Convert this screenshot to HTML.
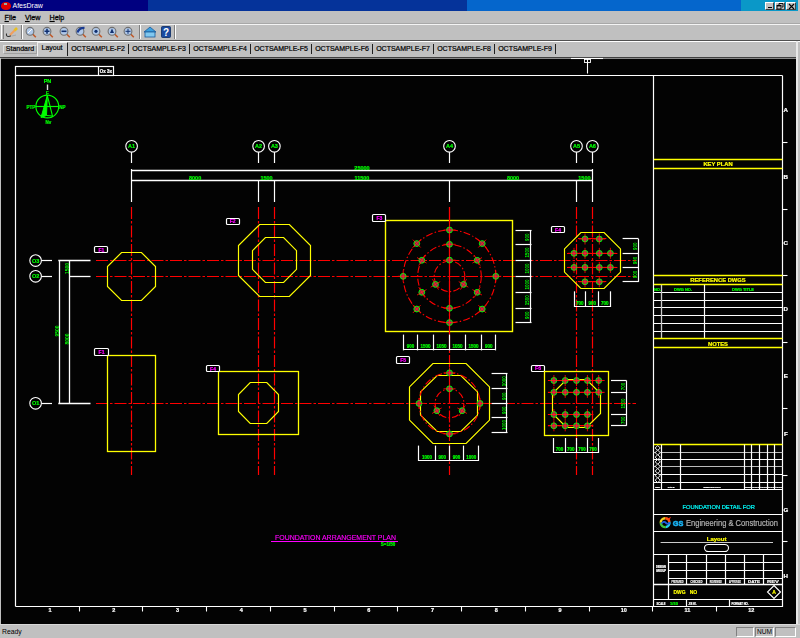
<!DOCTYPE html>
<html><head><meta charset="utf-8"><style>
*{box-sizing:border-box}
html,body{margin:0;padding:0}
body{width:800px;height:638px;overflow:hidden;position:relative;background:#c0c0c0;font-family:"Liberation Sans",sans-serif}
.a{position:absolute}
.btn{position:absolute;background:#c0c0c0;border-top:1px solid #fff;border-left:1px solid #fff;border-right:1px solid #404040;border-bottom:1px solid #404040}
.mi{position:absolute;top:11.8px;font-size:7.2px;color:#000;-webkit-text-stroke:0.25px #000;line-height:9px;transform:scaleY(1.12);transform-origin:0 0}
.mi u{text-decoration:underline}
.tab{position:absolute;top:43px;height:11px;font-size:7px;line-height:10px;color:#000;-webkit-text-stroke:0.2px #000;text-align:center;white-space:nowrap}
.sep{position:absolute;top:25px;width:2px;height:14px;border-left:1px solid #808080;border-right:1px solid #fff}
svg text{font-family:"Liberation Sans",sans-serif}
</style></head><body>
<!-- title bar -->
<div class="a" style="left:0;top:0;width:148px;height:11px;background:#000080"></div>
<div class="a" style="left:148px;top:0;width:319px;height:11px;background:#05339a"></div>
<div class="a" style="left:467px;top:0;width:274px;height:11px;background:#0566cc"></div>
<div class="a" style="left:741px;top:0;width:59px;height:11px;background:#0a98c8"></div>
<div class="a" style="left:0.5px;top:2px;width:10px;height:7.5px;border-radius:50%;background:#e00000"></div>
<div class="a" style="left:4px;top:3px;width:3px;height:2px;background:#9aa"></div>
<div class="a" style="left:12.5px;top:0px;font-size:7px;line-height:11px;color:#fff">AfesDraw</div>
<div class="btn" style="left:765px;top:1.5px;width:9px;height:8px"><div class="a" style="left:1.5px;top:4.5px;width:4px;height:1.3px;background:#000"></div></div>
<div class="btn" style="left:775px;top:1.5px;width:9.5px;height:8px"><svg class="a" style="left:0;top:0" width="8" height="7" viewBox="0 0 8 7"><path d="M3,0.5 H7 V4 H6 M3,0.5 V2" stroke="#000" stroke-width="0.9" fill="none"/><rect x="1" y="2.5" width="4" height="3.5" stroke="#000" stroke-width="0.9" fill="none"/><line x1="1" y1="2.8" x2="5" y2="2.8" stroke="#000" stroke-width="1.2"/></svg></div>
<div class="btn" style="left:786px;top:1.5px;width:10px;height:8px"><svg class="a" style="left:0;top:0" width="9" height="7" viewBox="0 0 9 7"><path d="M2,1 L7,6 M7,1 L2,6" stroke="#000" stroke-width="1.1"/></svg></div>
<div class="a" style="left:797.5px;top:0;width:2.5px;height:11px;background:#c0c0c0"></div>
<!-- menu -->
<div class="mi" style="left:4.5px"><u>F</u>ile</div>
<div class="mi" style="left:25px"><u>V</u>iew</div>
<div class="mi" style="left:49.5px"><u>H</u>elp</div>
<!-- toolbar -->
<div class="a" style="left:0;top:23px;width:800px;height:1px;background:#a8a8a8"></div><div class="a" style="left:0;top:24px;width:800px;height:1px;background:#f4f4f4"></div>
<div class="a" style="left:0;top:40px;width:800px;height:1.2px;background:#505050"></div>
<div class="a" style="left:1px;top:25px;width:3px;height:14px;border-left:1px solid #fff;border-right:1px solid #808080"></div>
<div class="sep" style="left:20.5px"></div>
<div class="sep" style="left:139px"></div>
<div class="sep" style="left:174px"></div>
<svg class="a" style="left:5px;top:26px" width="14" height="13" viewBox="0 0 14 13"><path d="M1.5,7.5 Q1,10.5 3.5,10.5 Q5,10.5 6,9.5" stroke="#303030" stroke-width="1.1" fill="none"/><path d="M5,9 L10.5,3.5" stroke="#f0a060" stroke-width="2.2"/><path d="M9.5,4.5 L12,2" stroke="#e8c020" stroke-width="2.6"/><path d="M7,10 L11,9" stroke="#a0a0a0" stroke-width="0.8"/></svg>
<svg class="a" style="left:24.4px;top:25px" width="14" height="14" viewBox="0 0 14 14"><line x1="8.8" y1="9.3" x2="11.8" y2="12.3" stroke="#c05828" stroke-width="1.6"/><circle cx="6" cy="6.3" r="3.9" fill="#b0c8e8" stroke="#707070" stroke-width="1.1"/><path d="M4,8 L8,4" stroke="#fff" stroke-width="1"/></svg>
<svg class="a" style="left:40.7px;top:25px" width="14" height="14" viewBox="0 0 14 14"><line x1="8.8" y1="9.3" x2="11.8" y2="12.3" stroke="#c05828" stroke-width="1.6"/><circle cx="6" cy="6.3" r="3.9" fill="#b0c8e8" stroke="#707070" stroke-width="1.1"/><path d="M3.5,6.3 H8.5 M6,3.8 V8.8" stroke="#103070" stroke-width="1.6"/></svg>
<svg class="a" style="left:57.5px;top:25px" width="14" height="14" viewBox="0 0 14 14"><line x1="8.8" y1="9.3" x2="11.8" y2="12.3" stroke="#c05828" stroke-width="1.6"/><circle cx="6" cy="6.3" r="3.9" fill="#b0c8e8" stroke="#707070" stroke-width="1.1"/><path d="M3.5,6.3 H8.5" stroke="#103070" stroke-width="1.6"/></svg>
<svg class="a" style="left:74px;top:25px" width="14" height="14" viewBox="0 0 14 14"><line x1="8.8" y1="9.3" x2="11.8" y2="12.3" stroke="#c05828" stroke-width="1.6"/><circle cx="6" cy="6.3" r="3.9" fill="#b0c8e8" stroke="#707070" stroke-width="1.1"/><path d="M3.5,7.5 Q5,2.5 10.5,2.8" stroke="#1a3a90" stroke-width="2.2" fill="none"/></svg>
<svg class="a" style="left:90.3px;top:25px" width="14" height="14" viewBox="0 0 14 14"><line x1="8.8" y1="9.3" x2="11.8" y2="12.3" stroke="#c05828" stroke-width="1.6"/><circle cx="6" cy="6.3" r="3.9" fill="#b0c8e8" stroke="#707070" stroke-width="1.1"/><circle cx="6" cy="6.3" r="1.6" fill="#103070"/></svg>
<svg class="a" style="left:106.3px;top:25px" width="14" height="14" viewBox="0 0 14 14"><line x1="8.8" y1="9.3" x2="11.8" y2="12.3" stroke="#c05828" stroke-width="1.6"/><circle cx="6" cy="6.3" r="3.9" fill="#b0c8e8" stroke="#707070" stroke-width="1.1"/><path d="M6,3.5 L8,8 L4,8 Z" fill="#103070"/></svg>
<svg class="a" style="left:122.1px;top:25px" width="14" height="14" viewBox="0 0 14 14"><line x1="8.8" y1="9.3" x2="11.8" y2="12.3" stroke="#c05828" stroke-width="1.6"/><circle cx="6" cy="6.3" r="3.9" fill="#b0c8e8" stroke="#707070" stroke-width="1.1"/><path d="M3.5,6.3 H8.5 M6,3.8 V8.8" stroke="#103070" stroke-width="1"/></svg>
<svg class="a" style="left:143px;top:26px" width="14" height="12" viewBox="0 0 14 12"><path d="M1,6 L7,1 L13,6 Z" fill="#3aa0e0" stroke="#1a5a9a" stroke-width="0.8"/><rect x="2" y="6" width="10" height="5" fill="#80c8f0" stroke="#1a5a9a" stroke-width="0.8"/></svg>
<svg class="a" style="left:161px;top:26px" width="10" height="12" viewBox="0 0 10 12"><rect x="0.5" y="0.5" width="9" height="11" rx="1" fill="#1a4aa0" stroke="#0a2a60" stroke-width="0.8"/><text x="5" y="9.5" font-size="10" font-weight="bold" fill="#fff" text-anchor="middle" font-family="Liberation Sans">?</text></svg>
<!-- tabs -->
<div class="a" style="left:0;top:41px;width:800px;height:1px;background:#fff"></div>
<div class="a" style="left:2.5px;top:44.5px;width:34.5px;height:9px;border:1px solid #e0e0e0;border-right-color:#a0a0a0;border-bottom-color:#a0a0a0"></div>
<div class="tab" style="left:3px;top:44px;width:34px">Standard</div>
<div class="a" style="left:37px;top:42px;width:31px;height:14px;background:#c6c6c6;border-left:1px solid #f0f0f0;border-top:1px solid #f0f0f0;border-right:1.2px solid #202020"></div>
<div class="tab" style="left:38px;top:42.5px;width:28px">Layout</div>
<div class="tab" style="left:68px;top:44px;width:60px">OCTSAMPLE-F2</div>
<div class="a" style="left:128px;top:43.5px;width:1.2px;height:10px;background:#202020"></div>
<div class="tab" style="left:129px;top:44px;width:60px">OCTSAMPLE-F3</div>
<div class="a" style="left:189px;top:43.5px;width:1.2px;height:10px;background:#202020"></div>
<div class="tab" style="left:190px;top:44px;width:60px">OCTSAMPLE-F4</div>
<div class="a" style="left:250px;top:43.5px;width:1.2px;height:10px;background:#202020"></div>
<div class="tab" style="left:251px;top:44px;width:60px">OCTSAMPLE-F5</div>
<div class="a" style="left:311px;top:43.5px;width:1.2px;height:10px;background:#202020"></div>
<div class="tab" style="left:312px;top:44px;width:60px">OCTSAMPLE-F6</div>
<div class="a" style="left:372px;top:43.5px;width:1.2px;height:10px;background:#202020"></div>
<div class="tab" style="left:373px;top:44px;width:60px">OCTSAMPLE-F7</div>
<div class="a" style="left:433px;top:43.5px;width:1.2px;height:10px;background:#202020"></div>
<div class="tab" style="left:434px;top:44px;width:60px">OCTSAMPLE-F8</div>
<div class="a" style="left:494px;top:43.5px;width:1.2px;height:10px;background:#202020"></div>
<div class="tab" style="left:495px;top:44px;width:60px">OCTSAMPLE-F9</div>
<div class="a" style="left:555px;top:43.5px;width:1.2px;height:10px;background:#202020"></div>
<div class="a" style="left:0;top:56.5px;width:796.5px;height:1.5px;background:#404040"></div>
<div class="a" style="left:1px;top:58px;width:795.5px;height:1px;background:#8a8a8a"></div>
<!-- canvas -->
<div class="a" style="left:1px;top:59px;width:795.5px;height:565px;background:#030303"></div>
<div class="a" style="left:796px;top:41px;width:1.8px;height:583px;background:#e8e8e8"></div>
<!-- status -->
<div class="a" style="left:0;top:624px;width:800px;height:1px;background:#d8d8d8"></div>
<div class="a" style="left:2px;top:625.5px;font-size:6.8px;line-height:12px;color:#000">Ready</div>
<div class="a" style="left:736px;top:627px;width:18px;height:9.5px;border:1px solid #808080;border-right-color:#fff;border-bottom-color:#fff"></div>
<div class="a" style="left:755px;top:627px;width:19px;height:9.5px;border:1px solid #808080;border-right-color:#fff;border-bottom-color:#fff;font-size:6.6px;line-height:8px;text-align:center;color:#000">NUM</div>
<div class="a" style="left:775px;top:627px;width:21px;height:9.5px;border:1px solid #808080;border-right-color:#fff;border-bottom-color:#fff"></div>
<svg class="a" style="left:0;top:0;will-change:transform" width="800" height="638" viewBox="0 0 800 638">
<rect x="15.50" y="66.50" width="98.00" height="9.00" stroke="#fff" stroke-width="1.2" fill="none" />
<line x1="98.50" y1="66.60" x2="98.50" y2="75.40" stroke="#fff" stroke-width="1.2" />
<text x="106.00" y="73.00" fill="#fff" font-size="4.5" text-anchor="middle" font-weight="bold"  stroke="#fff" stroke-width="0.22">Ox 3x</text>
<line x1="15.60" y1="75.50" x2="782.40" y2="75.50" stroke="#fff" stroke-width="1.2" />
<line x1="15.50" y1="75.50" x2="15.50" y2="606.50" stroke="#fff" stroke-width="1.2" />
<line x1="782.50" y1="75.50" x2="782.50" y2="607.00" stroke="#fff" stroke-width="1.2" />
<line x1="15.60" y1="606.50" x2="782.40" y2="606.50" stroke="#fff" stroke-width="1.2" />
<line x1="653.50" y1="75.50" x2="653.50" y2="607.00" stroke="#fff" stroke-width="1.2" />
<line x1="571.00" y1="58.50" x2="603.00" y2="58.50" stroke="#fff" stroke-width="1.1" />
<line x1="587.50" y1="59.00" x2="587.50" y2="73.50" stroke="#fff" stroke-width="1.1" />
<rect x="584.50" y="59.50" width="6.00" height="3.00" stroke="#fff" stroke-width="0.9" fill="none" />
<text x="785.80" y="112.40" fill="#fff" font-size="6.2" text-anchor="middle" font-weight="bold"  stroke="#fff" stroke-width="0.22">A</text>
<text x="785.80" y="178.90" fill="#fff" font-size="6.2" text-anchor="middle" font-weight="bold"  stroke="#fff" stroke-width="0.22">B</text>
<text x="785.80" y="244.90" fill="#fff" font-size="6.2" text-anchor="middle" font-weight="bold"  stroke="#fff" stroke-width="0.22">C</text>
<text x="785.80" y="311.40" fill="#fff" font-size="6.2" text-anchor="middle" font-weight="bold"  stroke="#fff" stroke-width="0.22">D</text>
<text x="785.80" y="378.40" fill="#fff" font-size="6.2" text-anchor="middle" font-weight="bold"  stroke="#fff" stroke-width="0.22">E</text>
<text x="785.80" y="435.90" fill="#fff" font-size="6.2" text-anchor="middle" font-weight="bold"  stroke="#fff" stroke-width="0.22">F</text>
<text x="785.80" y="512.40" fill="#fff" font-size="6.2" text-anchor="middle" font-weight="bold"  stroke="#fff" stroke-width="0.22">G</text>
<text x="785.80" y="578.00" fill="#fff" font-size="6.2" text-anchor="middle" font-weight="bold"  stroke="#fff" stroke-width="0.22">H</text>
<line x1="782.40" y1="142.50" x2="787.50" y2="142.50" stroke="#fff" stroke-width="1.1" />
<line x1="782.40" y1="209.50" x2="787.50" y2="209.50" stroke="#fff" stroke-width="1.1" />
<line x1="782.40" y1="275.50" x2="787.50" y2="275.50" stroke="#fff" stroke-width="1.1" />
<line x1="782.40" y1="342.50" x2="787.50" y2="342.50" stroke="#fff" stroke-width="1.1" />
<line x1="782.40" y1="408.50" x2="787.50" y2="408.50" stroke="#fff" stroke-width="1.1" />
<line x1="782.40" y1="475.50" x2="787.50" y2="475.50" stroke="#fff" stroke-width="1.1" />
<line x1="782.40" y1="541.50" x2="787.50" y2="541.50" stroke="#fff" stroke-width="1.1" />
<text x="50.00" y="611.90" fill="#fff" font-size="5.5" text-anchor="middle" font-weight="bold"  stroke="#fff" stroke-width="0.22">1</text>
<text x="113.75" y="611.90" fill="#fff" font-size="5.5" text-anchor="middle" font-weight="bold"  stroke="#fff" stroke-width="0.22">2</text>
<text x="177.50" y="611.90" fill="#fff" font-size="5.5" text-anchor="middle" font-weight="bold"  stroke="#fff" stroke-width="0.22">3</text>
<text x="241.25" y="611.90" fill="#fff" font-size="5.5" text-anchor="middle" font-weight="bold"  stroke="#fff" stroke-width="0.22">4</text>
<text x="305.00" y="611.90" fill="#fff" font-size="5.5" text-anchor="middle" font-weight="bold"  stroke="#fff" stroke-width="0.22">5</text>
<text x="368.75" y="611.90" fill="#fff" font-size="5.5" text-anchor="middle" font-weight="bold"  stroke="#fff" stroke-width="0.22">6</text>
<text x="432.50" y="611.90" fill="#fff" font-size="5.5" text-anchor="middle" font-weight="bold"  stroke="#fff" stroke-width="0.22">7</text>
<text x="496.25" y="611.90" fill="#fff" font-size="5.5" text-anchor="middle" font-weight="bold"  stroke="#fff" stroke-width="0.22">8</text>
<text x="560.00" y="611.90" fill="#fff" font-size="5.5" text-anchor="middle" font-weight="bold"  stroke="#fff" stroke-width="0.22">9</text>
<text x="623.75" y="611.90" fill="#fff" font-size="5.5" text-anchor="middle" font-weight="bold"  stroke="#fff" stroke-width="0.22">10</text>
<text x="687.50" y="611.90" fill="#fff" font-size="5.5" text-anchor="middle" font-weight="bold"  stroke="#fff" stroke-width="0.22">11</text>
<text x="751.25" y="611.90" fill="#fff" font-size="5.5" text-anchor="middle" font-weight="bold"  stroke="#fff" stroke-width="0.22">12</text>
<line x1="79.50" y1="606.50" x2="79.50" y2="611.50" stroke="#fff" stroke-width="1.1" />
<line x1="142.50" y1="606.50" x2="142.50" y2="611.50" stroke="#fff" stroke-width="1.1" />
<line x1="206.50" y1="606.50" x2="206.50" y2="611.50" stroke="#fff" stroke-width="1.1" />
<line x1="270.50" y1="606.50" x2="270.50" y2="611.50" stroke="#fff" stroke-width="1.1" />
<line x1="334.50" y1="606.50" x2="334.50" y2="611.50" stroke="#fff" stroke-width="1.1" />
<line x1="397.50" y1="606.50" x2="397.50" y2="611.50" stroke="#fff" stroke-width="1.1" />
<line x1="461.50" y1="606.50" x2="461.50" y2="611.50" stroke="#fff" stroke-width="1.1" />
<line x1="525.50" y1="606.50" x2="525.50" y2="611.50" stroke="#fff" stroke-width="1.1" />
<line x1="589.50" y1="606.50" x2="589.50" y2="611.50" stroke="#fff" stroke-width="1.1" />
<line x1="652.50" y1="606.50" x2="652.50" y2="611.50" stroke="#fff" stroke-width="1.1" />
<line x1="716.50" y1="606.50" x2="716.50" y2="611.50" stroke="#fff" stroke-width="1.1" />
<text x="47.50" y="83.20" fill="#0f0" font-size="5.5" text-anchor="middle" font-weight="bold"  stroke="#0f0" stroke-width="0.22">PN</text>
<line x1="47.50" y1="84.50" x2="47.50" y2="90.00" stroke="#ddd" stroke-width="1.4" />
<text x="47.30" y="94.50" fill="#0f0" font-size="4.5" text-anchor="middle" font-weight="bold"  stroke="#0f0" stroke-width="0.22">F</text>
<circle cx="47.30" cy="106.50" r="11.40" stroke="#0f0" stroke-width="1.2" fill="none" />
<line x1="35.50" y1="106.50" x2="59.00" y2="106.50" stroke="#0f0" stroke-width="1.2" />
<polygon points="47.3,95.5 41,117.5 46.5,115.5" fill="#0f0" stroke="#0f0" stroke-width="1"/>
<line x1="47.30" y1="95.50" x2="52.50" y2="116.00" stroke="#0f0" stroke-width="1.1" />
<line x1="46.50" y1="115.50" x2="52.50" y2="116.00" stroke="#0f0" stroke-width="1" />
<text x="31.00" y="108.60" fill="#0f0" font-size="4.5" text-anchor="middle" font-weight="bold"  stroke="#0f0" stroke-width="0.22">PTP</text>
<text x="62.50" y="108.60" fill="#0f0" font-size="4.5" text-anchor="middle" font-weight="bold"  stroke="#0f0" stroke-width="0.22">NP</text>
<text x="48.50" y="123.80" fill="#0f0" font-size="4.5" text-anchor="middle" font-weight="bold"  stroke="#0f0" stroke-width="0.22">Nv</text>
<circle cx="131.60" cy="146.30" r="5.80" stroke="#fff" stroke-width="1.1" fill="#000" />
<text x="131.60" y="148.40" fill="#0f0" font-size="5.5" text-anchor="middle" font-weight="bold"  stroke="#0f0" stroke-width="0.22">A1</text>
<line x1="131.50" y1="152.10" x2="131.50" y2="163.00" stroke="#fff" stroke-width="1.2" />
<line x1="131.50" y1="207.00" x2="131.50" y2="475.00" stroke="#f00" stroke-width="1.2" stroke-dasharray="12 2 2.5 2" stroke-dashoffset="0"/>
<circle cx="258.60" cy="146.30" r="5.80" stroke="#fff" stroke-width="1.1" fill="#000" />
<text x="258.60" y="148.40" fill="#0f0" font-size="5.5" text-anchor="middle" font-weight="bold"  stroke="#0f0" stroke-width="0.22">A2</text>
<line x1="258.50" y1="152.10" x2="258.50" y2="163.00" stroke="#fff" stroke-width="1.2" />
<line x1="258.50" y1="207.00" x2="258.50" y2="475.00" stroke="#f00" stroke-width="1.2" stroke-dasharray="12 2 2.5 2" stroke-dashoffset="0"/>
<circle cx="274.40" cy="146.30" r="5.80" stroke="#fff" stroke-width="1.1" fill="#000" />
<text x="274.40" y="148.40" fill="#0f0" font-size="5.5" text-anchor="middle" font-weight="bold"  stroke="#0f0" stroke-width="0.22">A3</text>
<line x1="274.50" y1="152.10" x2="274.50" y2="163.00" stroke="#fff" stroke-width="1.2" />
<line x1="274.50" y1="207.00" x2="274.50" y2="475.00" stroke="#f00" stroke-width="1.2" stroke-dasharray="12 2 2.5 2" stroke-dashoffset="0"/>
<circle cx="449.50" cy="146.30" r="5.80" stroke="#fff" stroke-width="1.1" fill="#000" />
<text x="449.50" y="148.40" fill="#0f0" font-size="5.5" text-anchor="middle" font-weight="bold"  stroke="#0f0" stroke-width="0.22">A4</text>
<line x1="449.50" y1="152.10" x2="449.50" y2="163.00" stroke="#fff" stroke-width="1.2" />
<line x1="449.50" y1="207.00" x2="449.50" y2="475.00" stroke="#f00" stroke-width="1.2" stroke-dasharray="12 2 2.5 2" stroke-dashoffset="0"/>
<circle cx="576.50" cy="146.30" r="5.80" stroke="#fff" stroke-width="1.1" fill="#000" />
<text x="576.50" y="148.40" fill="#0f0" font-size="5.5" text-anchor="middle" font-weight="bold"  stroke="#0f0" stroke-width="0.22">A5</text>
<line x1="576.50" y1="152.10" x2="576.50" y2="163.00" stroke="#fff" stroke-width="1.2" />
<line x1="576.50" y1="207.00" x2="576.50" y2="475.00" stroke="#f00" stroke-width="1.2" stroke-dasharray="12 2 2.5 2" stroke-dashoffset="0"/>
<circle cx="592.40" cy="146.30" r="5.80" stroke="#fff" stroke-width="1.1" fill="#000" />
<text x="592.40" y="148.40" fill="#0f0" font-size="5.5" text-anchor="middle" font-weight="bold"  stroke="#0f0" stroke-width="0.22">A6</text>
<line x1="592.50" y1="152.10" x2="592.50" y2="163.00" stroke="#fff" stroke-width="1.2" />
<line x1="592.50" y1="207.00" x2="592.50" y2="475.00" stroke="#f00" stroke-width="1.2" stroke-dasharray="12 2 2.5 2" stroke-dashoffset="0"/>
<line x1="131.60" y1="170.50" x2="592.40" y2="170.50" stroke="#fff" stroke-width="1.4" />
<line x1="131.60" y1="180.50" x2="592.40" y2="180.50" stroke="#fff" stroke-width="1.4" />
<line x1="131.50" y1="169.00" x2="131.50" y2="202.00" stroke="#fff" stroke-width="1.2" />
<line x1="258.50" y1="180.00" x2="258.50" y2="202.00" stroke="#fff" stroke-width="1.2" />
<line x1="274.50" y1="180.00" x2="274.50" y2="202.00" stroke="#fff" stroke-width="1.2" />
<line x1="449.50" y1="180.00" x2="449.50" y2="202.00" stroke="#fff" stroke-width="1.2" />
<line x1="576.50" y1="180.00" x2="576.50" y2="202.00" stroke="#fff" stroke-width="1.2" />
<line x1="592.50" y1="169.00" x2="592.50" y2="202.00" stroke="#fff" stroke-width="1.2" />
<text x="362.00" y="170.00" fill="#0f0" font-size="5.5" text-anchor="middle" font-weight="bold"  stroke="#0f0" stroke-width="0.22">25000</text>
<text x="195.10" y="180.00" fill="#0f0" font-size="5.5" text-anchor="middle" font-weight="bold"  stroke="#0f0" stroke-width="0.22">8000</text>
<text x="266.50" y="180.00" fill="#0f0" font-size="5.5" text-anchor="middle" font-weight="bold"  stroke="#0f0" stroke-width="0.22">1500</text>
<text x="361.95" y="180.00" fill="#0f0" font-size="5.5" text-anchor="middle" font-weight="bold"  stroke="#0f0" stroke-width="0.22">11500</text>
<text x="513.00" y="180.00" fill="#0f0" font-size="5.5" text-anchor="middle" font-weight="bold"  stroke="#0f0" stroke-width="0.22">8000</text>
<text x="584.45" y="180.00" fill="#0f0" font-size="5.5" text-anchor="middle" font-weight="bold"  stroke="#0f0" stroke-width="0.22">1500</text>
<circle cx="35.60" cy="260.60" r="5.80" stroke="#fff" stroke-width="1.1" fill="#000" />
<text x="35.60" y="262.70" fill="#0f0" font-size="5.5" text-anchor="middle" font-weight="bold"  stroke="#0f0" stroke-width="0.22">O3</text>
<line x1="41.40" y1="260.50" x2="52.00" y2="260.50" stroke="#fff" stroke-width="1.2" />
<line x1="96.00" y1="260.50" x2="636.00" y2="260.50" stroke="#f00" stroke-width="1.2" stroke-dasharray="12 2 2.5 2" stroke-dashoffset="0"/>
<circle cx="35.60" cy="276.30" r="5.80" stroke="#fff" stroke-width="1.1" fill="#000" />
<text x="35.60" y="278.40" fill="#0f0" font-size="5.5" text-anchor="middle" font-weight="bold"  stroke="#0f0" stroke-width="0.22">O2</text>
<line x1="41.40" y1="276.50" x2="52.00" y2="276.50" stroke="#fff" stroke-width="1.2" />
<line x1="96.00" y1="276.50" x2="636.00" y2="276.50" stroke="#f00" stroke-width="1.2" stroke-dasharray="12 2 2.5 2" stroke-dashoffset="0"/>
<circle cx="35.60" cy="403.30" r="5.80" stroke="#fff" stroke-width="1.1" fill="#000" />
<text x="35.60" y="405.40" fill="#0f0" font-size="5.5" text-anchor="middle" font-weight="bold"  stroke="#0f0" stroke-width="0.22">O1</text>
<line x1="41.40" y1="403.50" x2="52.00" y2="403.50" stroke="#fff" stroke-width="1.2" />
<line x1="96.00" y1="403.50" x2="636.00" y2="403.50" stroke="#f00" stroke-width="1.2" stroke-dasharray="12 2 2.5 2" stroke-dashoffset="0"/>
<line x1="58.30" y1="260.50" x2="90.50" y2="260.50" stroke="#fff" stroke-width="1.3" />
<line x1="69.00" y1="276.50" x2="90.50" y2="276.50" stroke="#fff" stroke-width="1.3" />
<line x1="58.30" y1="403.50" x2="90.50" y2="403.50" stroke="#fff" stroke-width="1.3" />
<line x1="59.50" y1="260.60" x2="59.50" y2="403.30" stroke="#fff" stroke-width="1.3" />
<line x1="69.50" y1="260.60" x2="69.50" y2="403.30" stroke="#fff" stroke-width="1.3" />
<text x="0" y="0" fill="#0f0" font-size="5" text-anchor="middle" font-weight="bold" dominant-baseline="central" transform="translate(66.60,268.50) rotate(-90)">1500</text>
<text x="0" y="0" fill="#0f0" font-size="5" text-anchor="middle" font-weight="bold" dominant-baseline="central" transform="translate(57.00,331.00) rotate(-90)">9500</text>
<text x="0" y="0" fill="#0f0" font-size="5" text-anchor="middle" font-weight="bold" dominant-baseline="central" transform="translate(67.00,339.00) rotate(-90)">8000</text>
<polygon points="121.56,252.50 141.44,252.50 155.50,266.56 155.50,286.44 141.44,300.50 121.56,300.50 107.50,286.44 107.50,266.56" stroke="#ff0" stroke-width="1.2" fill="none"/>
<rect x="94.50" y="246.50" width="13.00" height="6.00" stroke="#fff" stroke-width="1.2" fill="#000" rx="1"/>
<text x="101.40" y="251.50" fill="#f0f" font-size="5" text-anchor="middle" font-weight="bold"  stroke="#f0f" stroke-width="0.22">F1</text>
<polygon points="259.59,224.50 289.41,224.50 310.50,245.59 310.50,275.41 289.41,296.50 259.59,296.50 238.50,275.41 238.50,245.59" stroke="#ff0" stroke-width="1.2" fill="none"/>
<polygon points="265.39,237.50 283.61,237.50 296.50,250.68 296.50,269.32 283.61,282.50 265.39,282.50 252.50,269.32 252.50,250.68" stroke="#ff0" stroke-width="1.2" fill="none"/>
<rect x="226.50" y="218.50" width="13.00" height="6.00" stroke="#fff" stroke-width="1.2" fill="#000" rx="1"/>
<text x="232.60" y="223.30" fill="#f0f" font-size="5" text-anchor="middle" font-weight="bold"  stroke="#f0f" stroke-width="0.22">F2</text>
<rect x="385.50" y="220.50" width="127.00" height="111.00" stroke="#ff0" stroke-width="1.4" fill="none" />
<rect x="372.50" y="214.50" width="13.00" height="7.00" stroke="#fff" stroke-width="1.2" fill="#000" rx="1"/>
<text x="379.30" y="220.00" fill="#f0f" font-size="5" text-anchor="middle" font-weight="bold"  stroke="#f0f" stroke-width="0.22">F3</text>
<circle cx="449.50" cy="276.30" r="15.30" stroke="#f00" stroke-width="1.1" fill="none" stroke-dasharray="7 2.2 1.5 2.2"/>
<circle cx="449.50" cy="276.30" r="31.80" stroke="#f00" stroke-width="1.1" fill="none" stroke-dasharray="7 2.2 1.5 2.2"/>
<circle cx="449.50" cy="276.30" r="46.30" stroke="#f00" stroke-width="1.1" fill="none" stroke-dasharray="7 2.2 1.5 2.2"/>
<line x1="449.50" y1="207.00" x2="449.50" y2="338.00" stroke="#f00" stroke-width="1.1" />
<line x1="443.50" y1="230.00" x2="455.50" y2="230.00" stroke="#f00" stroke-width="0.9"/>
<line x1="449.50" y1="224.50" x2="449.50" y2="235.50" stroke="#f00" stroke-width="0.9"/>
<circle cx="449.50" cy="230.00" r="2.90" stroke="#0f0" stroke-width="1.0" fill="#803050" />
<line x1="446.50" y1="230.00" x2="452.50" y2="230.00" stroke="#f22" stroke-width="1"/>
<line x1="449.50" y1="227.00" x2="449.50" y2="233.00" stroke="#f22" stroke-width="1"/>
<line x1="478.00" y1="239.32" x2="486.48" y2="247.80" stroke="#f00" stroke-width="0.9"/>
<line x1="486.13" y1="239.67" x2="478.35" y2="247.45" stroke="#f00" stroke-width="0.9"/>
<circle cx="482.24" cy="243.56" r="2.90" stroke="#0f0" stroke-width="1.0" fill="#803050" />
<line x1="480.12" y1="241.44" x2="484.36" y2="245.68" stroke="#f22" stroke-width="1"/>
<line x1="484.36" y1="241.44" x2="480.12" y2="245.68" stroke="#f22" stroke-width="1"/>
<line x1="495.80" y1="270.30" x2="495.80" y2="282.30" stroke="#f00" stroke-width="0.9"/>
<line x1="501.30" y1="276.30" x2="490.30" y2="276.30" stroke="#f00" stroke-width="0.9"/>
<circle cx="495.80" cy="276.30" r="2.90" stroke="#0f0" stroke-width="1.0" fill="#803050" />
<line x1="495.80" y1="273.30" x2="495.80" y2="279.30" stroke="#f22" stroke-width="1"/>
<line x1="498.80" y1="276.30" x2="492.80" y2="276.30" stroke="#f22" stroke-width="1"/>
<line x1="486.48" y1="304.80" x2="478.00" y2="313.28" stroke="#f00" stroke-width="0.9"/>
<line x1="486.13" y1="312.93" x2="478.35" y2="305.15" stroke="#f00" stroke-width="0.9"/>
<circle cx="482.24" cy="309.04" r="2.90" stroke="#0f0" stroke-width="1.0" fill="#803050" />
<line x1="484.36" y1="306.92" x2="480.12" y2="311.16" stroke="#f22" stroke-width="1"/>
<line x1="484.36" y1="311.16" x2="480.12" y2="306.92" stroke="#f22" stroke-width="1"/>
<line x1="455.50" y1="322.60" x2="443.50" y2="322.60" stroke="#f00" stroke-width="0.9"/>
<line x1="449.50" y1="328.10" x2="449.50" y2="317.10" stroke="#f00" stroke-width="0.9"/>
<circle cx="449.50" cy="322.60" r="2.90" stroke="#0f0" stroke-width="1.0" fill="#803050" />
<line x1="452.50" y1="322.60" x2="446.50" y2="322.60" stroke="#f22" stroke-width="1"/>
<line x1="449.50" y1="325.60" x2="449.50" y2="319.60" stroke="#f22" stroke-width="1"/>
<line x1="421.00" y1="313.28" x2="412.52" y2="304.80" stroke="#f00" stroke-width="0.9"/>
<line x1="412.87" y1="312.93" x2="420.65" y2="305.15" stroke="#f00" stroke-width="0.9"/>
<circle cx="416.76" cy="309.04" r="2.90" stroke="#0f0" stroke-width="1.0" fill="#803050" />
<line x1="418.88" y1="311.16" x2="414.64" y2="306.92" stroke="#f22" stroke-width="1"/>
<line x1="414.64" y1="311.16" x2="418.88" y2="306.92" stroke="#f22" stroke-width="1"/>
<line x1="403.20" y1="282.30" x2="403.20" y2="270.30" stroke="#f00" stroke-width="0.9"/>
<line x1="397.70" y1="276.30" x2="408.70" y2="276.30" stroke="#f00" stroke-width="0.9"/>
<circle cx="403.20" cy="276.30" r="2.90" stroke="#0f0" stroke-width="1.0" fill="#803050" />
<line x1="403.20" y1="279.30" x2="403.20" y2="273.30" stroke="#f22" stroke-width="1"/>
<line x1="400.20" y1="276.30" x2="406.20" y2="276.30" stroke="#f22" stroke-width="1"/>
<line x1="412.52" y1="247.80" x2="421.00" y2="239.32" stroke="#f00" stroke-width="0.9"/>
<line x1="412.87" y1="239.67" x2="420.65" y2="247.45" stroke="#f00" stroke-width="0.9"/>
<circle cx="416.76" cy="243.56" r="2.90" stroke="#0f0" stroke-width="1.0" fill="#803050" />
<line x1="414.64" y1="245.68" x2="418.88" y2="241.44" stroke="#f22" stroke-width="1"/>
<line x1="414.64" y1="241.44" x2="418.88" y2="245.68" stroke="#f22" stroke-width="1"/>
<line x1="443.50" y1="244.30" x2="455.50" y2="244.30" stroke="#f00" stroke-width="0.9"/>
<line x1="449.50" y1="238.80" x2="449.50" y2="249.80" stroke="#f00" stroke-width="0.9"/>
<circle cx="449.50" cy="244.30" r="2.90" stroke="#0f0" stroke-width="1.0" fill="#803050" />
<line x1="446.50" y1="244.30" x2="452.50" y2="244.30" stroke="#f22" stroke-width="1"/>
<line x1="449.50" y1="241.30" x2="449.50" y2="247.30" stroke="#f22" stroke-width="1"/>
<line x1="474.21" y1="255.10" x2="480.21" y2="265.50" stroke="#f00" stroke-width="0.9"/>
<line x1="481.98" y1="257.55" x2="472.45" y2="263.05" stroke="#f00" stroke-width="0.9"/>
<circle cx="477.21" cy="260.30" r="2.90" stroke="#0f0" stroke-width="1.0" fill="#803050" />
<line x1="475.71" y1="257.70" x2="478.71" y2="262.90" stroke="#f22" stroke-width="1"/>
<line x1="479.81" y1="258.80" x2="474.61" y2="261.80" stroke="#f22" stroke-width="1"/>
<line x1="480.21" y1="287.10" x2="474.21" y2="297.50" stroke="#f00" stroke-width="0.9"/>
<line x1="481.98" y1="295.05" x2="472.45" y2="289.55" stroke="#f00" stroke-width="0.9"/>
<circle cx="477.21" cy="292.30" r="2.90" stroke="#0f0" stroke-width="1.0" fill="#803050" />
<line x1="478.71" y1="289.70" x2="475.71" y2="294.90" stroke="#f22" stroke-width="1"/>
<line x1="479.81" y1="293.80" x2="474.61" y2="290.80" stroke="#f22" stroke-width="1"/>
<line x1="455.50" y1="308.30" x2="443.50" y2="308.30" stroke="#f00" stroke-width="0.9"/>
<line x1="449.50" y1="313.80" x2="449.50" y2="302.80" stroke="#f00" stroke-width="0.9"/>
<circle cx="449.50" cy="308.30" r="2.90" stroke="#0f0" stroke-width="1.0" fill="#803050" />
<line x1="452.50" y1="308.30" x2="446.50" y2="308.30" stroke="#f22" stroke-width="1"/>
<line x1="449.50" y1="311.30" x2="449.50" y2="305.30" stroke="#f22" stroke-width="1"/>
<line x1="424.79" y1="297.50" x2="418.79" y2="287.10" stroke="#f00" stroke-width="0.9"/>
<line x1="417.02" y1="295.05" x2="426.55" y2="289.55" stroke="#f00" stroke-width="0.9"/>
<circle cx="421.79" cy="292.30" r="2.90" stroke="#0f0" stroke-width="1.0" fill="#803050" />
<line x1="423.29" y1="294.90" x2="420.29" y2="289.70" stroke="#f22" stroke-width="1"/>
<line x1="419.19" y1="293.80" x2="424.39" y2="290.80" stroke="#f22" stroke-width="1"/>
<line x1="418.79" y1="265.50" x2="424.79" y2="255.10" stroke="#f00" stroke-width="0.9"/>
<line x1="417.02" y1="257.55" x2="426.55" y2="263.05" stroke="#f00" stroke-width="0.9"/>
<circle cx="421.79" cy="260.30" r="2.90" stroke="#0f0" stroke-width="1.0" fill="#803050" />
<line x1="420.29" y1="262.90" x2="423.29" y2="257.70" stroke="#f22" stroke-width="1"/>
<line x1="419.19" y1="258.80" x2="424.39" y2="261.80" stroke="#f22" stroke-width="1"/>
<line x1="443.50" y1="260.10" x2="455.50" y2="260.10" stroke="#f00" stroke-width="0.9"/>
<line x1="449.50" y1="254.60" x2="449.50" y2="265.60" stroke="#f00" stroke-width="0.9"/>
<circle cx="449.50" cy="260.10" r="2.90" stroke="#0f0" stroke-width="1.0" fill="#803050" />
<line x1="446.50" y1="260.10" x2="452.50" y2="260.10" stroke="#f22" stroke-width="1"/>
<line x1="449.50" y1="257.10" x2="449.50" y2="263.10" stroke="#f22" stroke-width="1"/>
<line x1="466.53" y1="279.20" x2="460.53" y2="289.60" stroke="#f00" stroke-width="0.9"/>
<line x1="468.29" y1="287.15" x2="458.77" y2="281.65" stroke="#f00" stroke-width="0.9"/>
<circle cx="463.53" cy="284.40" r="2.90" stroke="#0f0" stroke-width="1.0" fill="#803050" />
<line x1="465.03" y1="281.80" x2="462.03" y2="287.00" stroke="#f22" stroke-width="1"/>
<line x1="466.13" y1="285.90" x2="460.93" y2="282.90" stroke="#f22" stroke-width="1"/>
<line x1="438.47" y1="289.60" x2="432.47" y2="279.20" stroke="#f00" stroke-width="0.9"/>
<line x1="430.71" y1="287.15" x2="440.23" y2="281.65" stroke="#f00" stroke-width="0.9"/>
<circle cx="435.47" cy="284.40" r="2.90" stroke="#0f0" stroke-width="1.0" fill="#803050" />
<line x1="436.97" y1="287.00" x2="433.97" y2="281.80" stroke="#f22" stroke-width="1"/>
<line x1="432.87" y1="285.90" x2="438.07" y2="282.90" stroke="#f22" stroke-width="1"/>
<line x1="530.50" y1="230.00" x2="530.50" y2="322.50" stroke="#fff" stroke-width="1.2" />
<line x1="515.50" y1="230.50" x2="531.50" y2="230.50" stroke="#fff" stroke-width="1.2" />
<line x1="515.50" y1="244.50" x2="531.50" y2="244.50" stroke="#fff" stroke-width="1.2" />
<line x1="515.50" y1="260.50" x2="531.50" y2="260.50" stroke="#fff" stroke-width="1.2" />
<line x1="515.50" y1="276.50" x2="531.50" y2="276.50" stroke="#fff" stroke-width="1.2" />
<line x1="515.50" y1="292.50" x2="531.50" y2="292.50" stroke="#fff" stroke-width="1.2" />
<line x1="515.50" y1="308.50" x2="531.50" y2="308.50" stroke="#fff" stroke-width="1.2" />
<line x1="515.50" y1="322.50" x2="531.50" y2="322.50" stroke="#fff" stroke-width="1.2" />
<text x="0" y="0" fill="#0f0" font-size="4.5" text-anchor="middle" font-weight="bold" dominant-baseline="central" transform="translate(527.00,237.15) rotate(-90)">900</text>
<text x="0" y="0" fill="#0f0" font-size="4.5" text-anchor="middle" font-weight="bold" dominant-baseline="central" transform="translate(527.00,252.40) rotate(-90)">1500</text>
<text x="0" y="0" fill="#0f0" font-size="4.5" text-anchor="middle" font-weight="bold" dominant-baseline="central" transform="translate(527.00,268.40) rotate(-90)">1000</text>
<text x="0" y="0" fill="#0f0" font-size="4.5" text-anchor="middle" font-weight="bold" dominant-baseline="central" transform="translate(527.00,284.40) rotate(-90)">1000</text>
<text x="0" y="0" fill="#0f0" font-size="4.5" text-anchor="middle" font-weight="bold" dominant-baseline="central" transform="translate(527.00,300.25) rotate(-90)">1500</text>
<text x="0" y="0" fill="#0f0" font-size="4.5" text-anchor="middle" font-weight="bold" dominant-baseline="central" transform="translate(527.00,315.25) rotate(-90)">900</text>
<line x1="403.20" y1="349.50" x2="495.80" y2="349.50" stroke="#fff" stroke-width="1.2" />
<line x1="403.50" y1="334.60" x2="403.50" y2="350.40" stroke="#fff" stroke-width="1.2" />
<line x1="417.50" y1="334.60" x2="417.50" y2="350.40" stroke="#fff" stroke-width="1.2" />
<line x1="433.50" y1="334.60" x2="433.50" y2="350.40" stroke="#fff" stroke-width="1.2" />
<line x1="449.50" y1="334.60" x2="449.50" y2="350.40" stroke="#fff" stroke-width="1.2" />
<line x1="465.50" y1="334.60" x2="465.50" y2="350.40" stroke="#fff" stroke-width="1.2" />
<line x1="481.50" y1="334.60" x2="481.50" y2="350.40" stroke="#fff" stroke-width="1.2" />
<line x1="495.50" y1="334.60" x2="495.50" y2="350.40" stroke="#fff" stroke-width="1.2" />
<text x="410.40" y="348.00" fill="#0f0" font-size="4.5" text-anchor="middle" font-weight="bold"  stroke="#0f0" stroke-width="0.22">900</text>
<text x="425.50" y="348.00" fill="#0f0" font-size="4.5" text-anchor="middle" font-weight="bold"  stroke="#0f0" stroke-width="0.22">1500</text>
<text x="441.45" y="348.00" fill="#0f0" font-size="4.5" text-anchor="middle" font-weight="bold"  stroke="#0f0" stroke-width="0.22">1050</text>
<text x="457.45" y="348.00" fill="#0f0" font-size="4.5" text-anchor="middle" font-weight="bold"  stroke="#0f0" stroke-width="0.22">1050</text>
<text x="473.50" y="348.00" fill="#0f0" font-size="4.5" text-anchor="middle" font-weight="bold"  stroke="#0f0" stroke-width="0.22">1500</text>
<text x="488.70" y="348.00" fill="#0f0" font-size="4.5" text-anchor="middle" font-weight="bold"  stroke="#0f0" stroke-width="0.22">900</text>
<rect x="551.50" y="226.50" width="13.00" height="6.00" stroke="#fff" stroke-width="1.2" fill="#000" rx="1"/>
<text x="558.00" y="231.70" fill="#f0f" font-size="5" text-anchor="middle" font-weight="bold"  stroke="#f0f" stroke-width="0.22">F4</text>
<polygon points="580.90,232.50 604.10,232.50 620.50,248.90 620.50,272.10 604.10,288.50 580.90,288.50 564.50,272.10 564.50,248.90" stroke="#ff0" stroke-width="1.2" fill="none"/>
<line x1="578.00" y1="238.50" x2="606.30" y2="238.50" stroke="#f00" stroke-width="1" />
<line x1="579.00" y1="239.00" x2="591.00" y2="239.00" stroke="#f00" stroke-width="0.9"/>
<line x1="585.00" y1="233.50" x2="585.00" y2="244.50" stroke="#f00" stroke-width="0.9"/>
<circle cx="585.00" cy="239.00" r="2.90" stroke="#0f0" stroke-width="1.0" fill="#803050" />
<line x1="582.00" y1="239.00" x2="588.00" y2="239.00" stroke="#f22" stroke-width="1"/>
<line x1="585.00" y1="236.00" x2="585.00" y2="242.00" stroke="#f22" stroke-width="1"/>
<line x1="593.30" y1="239.00" x2="605.30" y2="239.00" stroke="#f00" stroke-width="0.9"/>
<line x1="599.30" y1="233.50" x2="599.30" y2="244.50" stroke="#f00" stroke-width="0.9"/>
<circle cx="599.30" cy="239.00" r="2.90" stroke="#0f0" stroke-width="1.0" fill="#803050" />
<line x1="596.30" y1="239.00" x2="602.30" y2="239.00" stroke="#f22" stroke-width="1"/>
<line x1="599.30" y1="236.00" x2="599.30" y2="242.00" stroke="#f22" stroke-width="1"/>
<line x1="567.00" y1="253.50" x2="617.40" y2="253.50" stroke="#f00" stroke-width="1" />
<line x1="568.00" y1="253.30" x2="580.00" y2="253.30" stroke="#f00" stroke-width="0.9"/>
<line x1="574.00" y1="247.80" x2="574.00" y2="258.80" stroke="#f00" stroke-width="0.9"/>
<circle cx="574.00" cy="253.30" r="2.90" stroke="#0f0" stroke-width="1.0" fill="#803050" />
<line x1="571.00" y1="253.30" x2="577.00" y2="253.30" stroke="#f22" stroke-width="1"/>
<line x1="574.00" y1="250.30" x2="574.00" y2="256.30" stroke="#f22" stroke-width="1"/>
<line x1="579.00" y1="253.30" x2="591.00" y2="253.30" stroke="#f00" stroke-width="0.9"/>
<line x1="585.00" y1="247.80" x2="585.00" y2="258.80" stroke="#f00" stroke-width="0.9"/>
<circle cx="585.00" cy="253.30" r="2.90" stroke="#0f0" stroke-width="1.0" fill="#803050" />
<line x1="582.00" y1="253.30" x2="588.00" y2="253.30" stroke="#f22" stroke-width="1"/>
<line x1="585.00" y1="250.30" x2="585.00" y2="256.30" stroke="#f22" stroke-width="1"/>
<line x1="593.30" y1="253.30" x2="605.30" y2="253.30" stroke="#f00" stroke-width="0.9"/>
<line x1="599.30" y1="247.80" x2="599.30" y2="258.80" stroke="#f00" stroke-width="0.9"/>
<circle cx="599.30" cy="253.30" r="2.90" stroke="#0f0" stroke-width="1.0" fill="#803050" />
<line x1="596.30" y1="253.30" x2="602.30" y2="253.30" stroke="#f22" stroke-width="1"/>
<line x1="599.30" y1="250.30" x2="599.30" y2="256.30" stroke="#f22" stroke-width="1"/>
<line x1="604.40" y1="253.30" x2="616.40" y2="253.30" stroke="#f00" stroke-width="0.9"/>
<line x1="610.40" y1="247.80" x2="610.40" y2="258.80" stroke="#f00" stroke-width="0.9"/>
<circle cx="610.40" cy="253.30" r="2.90" stroke="#0f0" stroke-width="1.0" fill="#803050" />
<line x1="607.40" y1="253.30" x2="613.40" y2="253.30" stroke="#f22" stroke-width="1"/>
<line x1="610.40" y1="250.30" x2="610.40" y2="256.30" stroke="#f22" stroke-width="1"/>
<line x1="567.00" y1="267.50" x2="617.40" y2="267.50" stroke="#f00" stroke-width="1" />
<line x1="568.00" y1="267.40" x2="580.00" y2="267.40" stroke="#f00" stroke-width="0.9"/>
<line x1="574.00" y1="261.90" x2="574.00" y2="272.90" stroke="#f00" stroke-width="0.9"/>
<circle cx="574.00" cy="267.40" r="2.90" stroke="#0f0" stroke-width="1.0" fill="#803050" />
<line x1="571.00" y1="267.40" x2="577.00" y2="267.40" stroke="#f22" stroke-width="1"/>
<line x1="574.00" y1="264.40" x2="574.00" y2="270.40" stroke="#f22" stroke-width="1"/>
<line x1="579.00" y1="267.40" x2="591.00" y2="267.40" stroke="#f00" stroke-width="0.9"/>
<line x1="585.00" y1="261.90" x2="585.00" y2="272.90" stroke="#f00" stroke-width="0.9"/>
<circle cx="585.00" cy="267.40" r="2.90" stroke="#0f0" stroke-width="1.0" fill="#803050" />
<line x1="582.00" y1="267.40" x2="588.00" y2="267.40" stroke="#f22" stroke-width="1"/>
<line x1="585.00" y1="264.40" x2="585.00" y2="270.40" stroke="#f22" stroke-width="1"/>
<line x1="593.30" y1="267.40" x2="605.30" y2="267.40" stroke="#f00" stroke-width="0.9"/>
<line x1="599.30" y1="261.90" x2="599.30" y2="272.90" stroke="#f00" stroke-width="0.9"/>
<circle cx="599.30" cy="267.40" r="2.90" stroke="#0f0" stroke-width="1.0" fill="#803050" />
<line x1="596.30" y1="267.40" x2="602.30" y2="267.40" stroke="#f22" stroke-width="1"/>
<line x1="599.30" y1="264.40" x2="599.30" y2="270.40" stroke="#f22" stroke-width="1"/>
<line x1="604.40" y1="267.40" x2="616.40" y2="267.40" stroke="#f00" stroke-width="0.9"/>
<line x1="610.40" y1="261.90" x2="610.40" y2="272.90" stroke="#f00" stroke-width="0.9"/>
<circle cx="610.40" cy="267.40" r="2.90" stroke="#0f0" stroke-width="1.0" fill="#803050" />
<line x1="607.40" y1="267.40" x2="613.40" y2="267.40" stroke="#f22" stroke-width="1"/>
<line x1="610.40" y1="264.40" x2="610.40" y2="270.40" stroke="#f22" stroke-width="1"/>
<line x1="578.00" y1="281.50" x2="606.30" y2="281.50" stroke="#f00" stroke-width="1" />
<line x1="579.00" y1="281.80" x2="591.00" y2="281.80" stroke="#f00" stroke-width="0.9"/>
<line x1="585.00" y1="276.30" x2="585.00" y2="287.30" stroke="#f00" stroke-width="0.9"/>
<circle cx="585.00" cy="281.80" r="2.90" stroke="#0f0" stroke-width="1.0" fill="#803050" />
<line x1="582.00" y1="281.80" x2="588.00" y2="281.80" stroke="#f22" stroke-width="1"/>
<line x1="585.00" y1="278.80" x2="585.00" y2="284.80" stroke="#f22" stroke-width="1"/>
<line x1="593.30" y1="281.80" x2="605.30" y2="281.80" stroke="#f00" stroke-width="0.9"/>
<line x1="599.30" y1="276.30" x2="599.30" y2="287.30" stroke="#f00" stroke-width="0.9"/>
<circle cx="599.30" cy="281.80" r="2.90" stroke="#0f0" stroke-width="1.0" fill="#803050" />
<line x1="596.30" y1="281.80" x2="602.30" y2="281.80" stroke="#f22" stroke-width="1"/>
<line x1="599.30" y1="278.80" x2="599.30" y2="284.80" stroke="#f22" stroke-width="1"/>
<line x1="638.50" y1="239.00" x2="638.50" y2="281.90" stroke="#fff" stroke-width="1.2" />
<line x1="622.60" y1="238.50" x2="638.60" y2="238.50" stroke="#fff" stroke-width="1.2" />
<line x1="622.60" y1="253.50" x2="638.60" y2="253.50" stroke="#fff" stroke-width="1.2" />
<line x1="622.60" y1="267.50" x2="638.60" y2="267.50" stroke="#fff" stroke-width="1.2" />
<line x1="622.60" y1="281.50" x2="638.60" y2="281.50" stroke="#fff" stroke-width="1.2" />
<text x="0" y="0" fill="#0f0" font-size="4.5" text-anchor="middle" font-weight="bold" dominant-baseline="central" transform="translate(635.00,246.30) rotate(-90)">900</text>
<text x="0" y="0" fill="#0f0" font-size="4.5" text-anchor="middle" font-weight="bold" dominant-baseline="central" transform="translate(635.00,260.45) rotate(-90)">900</text>
<text x="0" y="0" fill="#0f0" font-size="4.5" text-anchor="middle" font-weight="bold" dominant-baseline="central" transform="translate(635.00,274.60) rotate(-90)">900</text>
<line x1="574.00" y1="306.50" x2="610.30" y2="306.50" stroke="#fff" stroke-width="1.2" />
<line x1="574.50" y1="291.30" x2="574.50" y2="307.00" stroke="#fff" stroke-width="1.2" />
<line x1="585.50" y1="291.30" x2="585.50" y2="307.00" stroke="#fff" stroke-width="1.2" />
<line x1="598.50" y1="291.30" x2="598.50" y2="307.00" stroke="#fff" stroke-width="1.2" />
<line x1="610.50" y1="291.30" x2="610.50" y2="307.00" stroke="#fff" stroke-width="1.2" />
<text x="579.65" y="305.00" fill="#0f0" font-size="4.5" text-anchor="middle" font-weight="bold"  stroke="#0f0" stroke-width="0.22">700</text>
<text x="592.15" y="305.00" fill="#0f0" font-size="4.5" text-anchor="middle" font-weight="bold"  stroke="#0f0" stroke-width="0.22">900</text>
<text x="604.65" y="305.00" fill="#0f0" font-size="4.5" text-anchor="middle" font-weight="bold"  stroke="#0f0" stroke-width="0.22">700</text>
<rect x="107.50" y="355.50" width="48.00" height="96.00" stroke="#ff0" stroke-width="1.3" fill="none" />
<rect x="94.50" y="348.50" width="14.00" height="7.00" stroke="#fff" stroke-width="1.2" fill="#000" rx="1"/>
<text x="101.50" y="354.20" fill="#f0f" font-size="5" text-anchor="middle" font-weight="bold"  stroke="#f0f" stroke-width="0.22">F1</text>
<rect x="218.50" y="371.50" width="80.00" height="63.00" stroke="#ff0" stroke-width="1.3" fill="none" />
<polygon points="250.22,382.50 266.78,382.50 278.50,394.51 278.50,411.49 266.78,423.50 250.22,423.50 238.50,411.49 238.50,394.51" stroke="#ff0" stroke-width="1.2" fill="none"/>
<rect x="206.50" y="365.50" width="13.00" height="6.00" stroke="#fff" stroke-width="1.2" fill="#000" rx="1"/>
<text x="213.00" y="370.50" fill="#f0f" font-size="5" text-anchor="middle" font-weight="bold"  stroke="#f0f" stroke-width="0.22">F4</text>
<rect x="396.50" y="356.50" width="13.00" height="7.00" stroke="#fff" stroke-width="1.2" fill="#000" rx="1"/>
<text x="403.20" y="362.20" fill="#f0f" font-size="5" text-anchor="middle" font-weight="bold"  stroke="#f0f" stroke-width="0.22">F5</text>
<polygon points="432.93,363.50 466.07,363.50 489.50,386.93 489.50,420.07 466.07,443.50 432.93,443.50 409.50,420.07 409.50,386.93" stroke="#ff0" stroke-width="1.2" fill="none"/>
<polygon points="437.19,375.50 460.81,375.50 477.50,391.90 477.50,415.10 460.81,431.50 437.19,431.50 420.50,415.10 420.50,391.90" stroke="#ff0" stroke-width="1.2" fill="none"/>
<circle cx="449.50" cy="403.40" r="30.50" stroke="#f00" stroke-width="1.1" fill="none" stroke-dasharray="7 2.2 1.5 2.2"/>
<circle cx="449.50" cy="403.40" r="14.40" stroke="#f00" stroke-width="1.1" fill="none" stroke-dasharray="7 2.2 1.5 2.2"/>
<line x1="443.50" y1="372.90" x2="455.50" y2="372.90" stroke="#f00" stroke-width="0.9"/>
<line x1="449.50" y1="367.40" x2="449.50" y2="378.40" stroke="#f00" stroke-width="0.9"/>
<circle cx="449.50" cy="372.90" r="2.90" stroke="#0f0" stroke-width="1.0" fill="#803050" />
<line x1="446.50" y1="372.90" x2="452.50" y2="372.90" stroke="#f22" stroke-width="1"/>
<line x1="449.50" y1="369.90" x2="449.50" y2="375.90" stroke="#f22" stroke-width="1"/>
<line x1="474.00" y1="403.40" x2="486.00" y2="403.40" stroke="#f00" stroke-width="0.9"/>
<line x1="480.00" y1="397.90" x2="480.00" y2="408.90" stroke="#f00" stroke-width="0.9"/>
<circle cx="480.00" cy="403.40" r="2.90" stroke="#0f0" stroke-width="1.0" fill="#803050" />
<line x1="477.00" y1="403.40" x2="483.00" y2="403.40" stroke="#f22" stroke-width="1"/>
<line x1="480.00" y1="400.40" x2="480.00" y2="406.40" stroke="#f22" stroke-width="1"/>
<line x1="443.50" y1="433.90" x2="455.50" y2="433.90" stroke="#f00" stroke-width="0.9"/>
<line x1="449.50" y1="428.40" x2="449.50" y2="439.40" stroke="#f00" stroke-width="0.9"/>
<circle cx="449.50" cy="433.90" r="2.90" stroke="#0f0" stroke-width="1.0" fill="#803050" />
<line x1="446.50" y1="433.90" x2="452.50" y2="433.90" stroke="#f22" stroke-width="1"/>
<line x1="449.50" y1="430.90" x2="449.50" y2="436.90" stroke="#f22" stroke-width="1"/>
<line x1="413.00" y1="403.40" x2="425.00" y2="403.40" stroke="#f00" stroke-width="0.9"/>
<line x1="419.00" y1="397.90" x2="419.00" y2="408.90" stroke="#f00" stroke-width="0.9"/>
<circle cx="419.00" cy="403.40" r="2.90" stroke="#0f0" stroke-width="1.0" fill="#803050" />
<line x1="416.00" y1="403.40" x2="422.00" y2="403.40" stroke="#f22" stroke-width="1"/>
<line x1="419.00" y1="400.40" x2="419.00" y2="406.40" stroke="#f22" stroke-width="1"/>
<line x1="443.50" y1="388.80" x2="455.50" y2="388.80" stroke="#f00" stroke-width="0.9"/>
<line x1="449.50" y1="383.30" x2="449.50" y2="394.30" stroke="#f00" stroke-width="0.9"/>
<circle cx="449.50" cy="388.80" r="2.90" stroke="#0f0" stroke-width="1.0" fill="#803050" />
<line x1="446.50" y1="388.80" x2="452.50" y2="388.80" stroke="#f22" stroke-width="1"/>
<line x1="449.50" y1="385.80" x2="449.50" y2="391.80" stroke="#f22" stroke-width="1"/>
<line x1="465.14" y1="405.50" x2="459.14" y2="415.90" stroke="#f00" stroke-width="0.9"/>
<line x1="466.91" y1="413.45" x2="457.38" y2="407.95" stroke="#f00" stroke-width="0.9"/>
<circle cx="462.14" cy="410.70" r="2.90" stroke="#0f0" stroke-width="1.0" fill="#803050" />
<line x1="463.64" y1="408.10" x2="460.64" y2="413.30" stroke="#f22" stroke-width="1"/>
<line x1="464.74" y1="412.20" x2="459.55" y2="409.20" stroke="#f22" stroke-width="1"/>
<line x1="439.86" y1="415.90" x2="433.86" y2="405.50" stroke="#f00" stroke-width="0.9"/>
<line x1="432.09" y1="413.45" x2="441.62" y2="407.95" stroke="#f00" stroke-width="0.9"/>
<circle cx="436.86" cy="410.70" r="2.90" stroke="#0f0" stroke-width="1.0" fill="#803050" />
<line x1="438.36" y1="413.30" x2="435.36" y2="408.10" stroke="#f22" stroke-width="1"/>
<line x1="434.26" y1="412.20" x2="439.45" y2="409.20" stroke="#f22" stroke-width="1"/>
<line x1="506.50" y1="373.50" x2="506.50" y2="432.80" stroke="#fff" stroke-width="1.2" />
<line x1="491.60" y1="373.50" x2="507.50" y2="373.50" stroke="#fff" stroke-width="1.2" />
<line x1="491.60" y1="388.50" x2="507.50" y2="388.50" stroke="#fff" stroke-width="1.2" />
<line x1="491.60" y1="403.50" x2="507.50" y2="403.50" stroke="#fff" stroke-width="1.2" />
<line x1="491.60" y1="417.50" x2="507.50" y2="417.50" stroke="#fff" stroke-width="1.2" />
<line x1="491.60" y1="432.50" x2="507.50" y2="432.50" stroke="#fff" stroke-width="1.2" />
<text x="0" y="0" fill="#0f0" font-size="4.5" text-anchor="middle" font-weight="bold" dominant-baseline="central" transform="translate(504.00,381.25) rotate(-90)">1000</text>
<text x="0" y="0" fill="#0f0" font-size="4.5" text-anchor="middle" font-weight="bold" dominant-baseline="central" transform="translate(504.00,396.20) rotate(-90)">900</text>
<text x="0" y="0" fill="#0f0" font-size="4.5" text-anchor="middle" font-weight="bold" dominant-baseline="central" transform="translate(504.00,410.30) rotate(-90)">900</text>
<text x="0" y="0" fill="#0f0" font-size="4.5" text-anchor="middle" font-weight="bold" dominant-baseline="central" transform="translate(504.00,425.00) rotate(-90)">1000</text>
<line x1="418.80" y1="460.50" x2="479.00" y2="460.50" stroke="#fff" stroke-width="1.2" />
<line x1="418.50" y1="445.60" x2="418.50" y2="461.00" stroke="#fff" stroke-width="1.2" />
<line x1="435.50" y1="445.60" x2="435.50" y2="461.00" stroke="#fff" stroke-width="1.2" />
<line x1="449.50" y1="445.60" x2="449.50" y2="461.00" stroke="#fff" stroke-width="1.2" />
<line x1="463.50" y1="445.60" x2="463.50" y2="461.00" stroke="#fff" stroke-width="1.2" />
<line x1="478.50" y1="445.60" x2="478.50" y2="461.00" stroke="#fff" stroke-width="1.2" />
<text x="427.00" y="459.00" fill="#0f0" font-size="4.5" text-anchor="middle" font-weight="bold"  stroke="#0f0" stroke-width="0.22">1000</text>
<text x="442.35" y="459.00" fill="#0f0" font-size="4.5" text-anchor="middle" font-weight="bold"  stroke="#0f0" stroke-width="0.22">900</text>
<text x="456.45" y="459.00" fill="#0f0" font-size="4.5" text-anchor="middle" font-weight="bold"  stroke="#0f0" stroke-width="0.22">900</text>
<text x="471.20" y="459.00" fill="#0f0" font-size="4.5" text-anchor="middle" font-weight="bold"  stroke="#0f0" stroke-width="0.22">1000</text>
<rect x="531.50" y="365.50" width="13.00" height="6.00" stroke="#fff" stroke-width="1.2" fill="#000" rx="1"/>
<text x="538.00" y="370.40" fill="#f0f" font-size="5" text-anchor="middle" font-weight="bold"  stroke="#f0f" stroke-width="0.22">F6</text>
<rect x="544.50" y="371.50" width="64.00" height="64.00" stroke="#ff0" stroke-width="1.3" fill="none" />
<polygon points="566.56,379.50 586.44,379.50 600.50,393.56 600.50,413.44 586.44,427.50 566.56,427.50 552.50,413.44 552.50,393.56" stroke="#ff0" stroke-width="1.2" fill="none"/>
<line x1="548.00" y1="380.50" x2="603.70" y2="380.50" stroke="#f00" stroke-width="1" />
<line x1="547.90" y1="380.50" x2="559.90" y2="380.50" stroke="#f00" stroke-width="0.9"/>
<line x1="553.90" y1="375.00" x2="553.90" y2="386.00" stroke="#f00" stroke-width="0.9"/>
<circle cx="553.90" cy="380.50" r="2.90" stroke="#0f0" stroke-width="1.0" fill="#803050" />
<line x1="550.90" y1="380.50" x2="556.90" y2="380.50" stroke="#f22" stroke-width="1"/>
<line x1="553.90" y1="377.50" x2="553.90" y2="383.50" stroke="#f22" stroke-width="1"/>
<line x1="559.20" y1="380.50" x2="571.20" y2="380.50" stroke="#f00" stroke-width="0.9"/>
<line x1="565.20" y1="375.00" x2="565.20" y2="386.00" stroke="#f00" stroke-width="0.9"/>
<circle cx="565.20" cy="380.50" r="2.90" stroke="#0f0" stroke-width="1.0" fill="#803050" />
<line x1="562.20" y1="380.50" x2="568.20" y2="380.50" stroke="#f22" stroke-width="1"/>
<line x1="565.20" y1="377.50" x2="565.20" y2="383.50" stroke="#f22" stroke-width="1"/>
<line x1="570.50" y1="380.50" x2="582.50" y2="380.50" stroke="#f00" stroke-width="0.9"/>
<line x1="576.50" y1="375.00" x2="576.50" y2="386.00" stroke="#f00" stroke-width="0.9"/>
<circle cx="576.50" cy="380.50" r="2.90" stroke="#0f0" stroke-width="1.0" fill="#803050" />
<line x1="573.50" y1="380.50" x2="579.50" y2="380.50" stroke="#f22" stroke-width="1"/>
<line x1="576.50" y1="377.50" x2="576.50" y2="383.50" stroke="#f22" stroke-width="1"/>
<line x1="581.40" y1="380.50" x2="593.40" y2="380.50" stroke="#f00" stroke-width="0.9"/>
<line x1="587.40" y1="375.00" x2="587.40" y2="386.00" stroke="#f00" stroke-width="0.9"/>
<circle cx="587.40" cy="380.50" r="2.90" stroke="#0f0" stroke-width="1.0" fill="#803050" />
<line x1="584.40" y1="380.50" x2="590.40" y2="380.50" stroke="#f22" stroke-width="1"/>
<line x1="587.40" y1="377.50" x2="587.40" y2="383.50" stroke="#f22" stroke-width="1"/>
<line x1="592.70" y1="380.50" x2="604.70" y2="380.50" stroke="#f00" stroke-width="0.9"/>
<line x1="598.70" y1="375.00" x2="598.70" y2="386.00" stroke="#f00" stroke-width="0.9"/>
<circle cx="598.70" cy="380.50" r="2.90" stroke="#0f0" stroke-width="1.0" fill="#803050" />
<line x1="595.70" y1="380.50" x2="601.70" y2="380.50" stroke="#f22" stroke-width="1"/>
<line x1="598.70" y1="377.50" x2="598.70" y2="383.50" stroke="#f22" stroke-width="1"/>
<line x1="548.00" y1="392.50" x2="603.70" y2="392.50" stroke="#f00" stroke-width="1" />
<line x1="547.90" y1="392.30" x2="559.90" y2="392.30" stroke="#f00" stroke-width="0.9"/>
<line x1="553.90" y1="386.80" x2="553.90" y2="397.80" stroke="#f00" stroke-width="0.9"/>
<circle cx="553.90" cy="392.30" r="2.90" stroke="#0f0" stroke-width="1.0" fill="#803050" />
<line x1="550.90" y1="392.30" x2="556.90" y2="392.30" stroke="#f22" stroke-width="1"/>
<line x1="553.90" y1="389.30" x2="553.90" y2="395.30" stroke="#f22" stroke-width="1"/>
<line x1="559.20" y1="392.30" x2="571.20" y2="392.30" stroke="#f00" stroke-width="0.9"/>
<line x1="565.20" y1="386.80" x2="565.20" y2="397.80" stroke="#f00" stroke-width="0.9"/>
<circle cx="565.20" cy="392.30" r="2.90" stroke="#0f0" stroke-width="1.0" fill="#803050" />
<line x1="562.20" y1="392.30" x2="568.20" y2="392.30" stroke="#f22" stroke-width="1"/>
<line x1="565.20" y1="389.30" x2="565.20" y2="395.30" stroke="#f22" stroke-width="1"/>
<line x1="570.50" y1="392.30" x2="582.50" y2="392.30" stroke="#f00" stroke-width="0.9"/>
<line x1="576.50" y1="386.80" x2="576.50" y2="397.80" stroke="#f00" stroke-width="0.9"/>
<circle cx="576.50" cy="392.30" r="2.90" stroke="#0f0" stroke-width="1.0" fill="#803050" />
<line x1="573.50" y1="392.30" x2="579.50" y2="392.30" stroke="#f22" stroke-width="1"/>
<line x1="576.50" y1="389.30" x2="576.50" y2="395.30" stroke="#f22" stroke-width="1"/>
<line x1="581.40" y1="392.30" x2="593.40" y2="392.30" stroke="#f00" stroke-width="0.9"/>
<line x1="587.40" y1="386.80" x2="587.40" y2="397.80" stroke="#f00" stroke-width="0.9"/>
<circle cx="587.40" cy="392.30" r="2.90" stroke="#0f0" stroke-width="1.0" fill="#803050" />
<line x1="584.40" y1="392.30" x2="590.40" y2="392.30" stroke="#f22" stroke-width="1"/>
<line x1="587.40" y1="389.30" x2="587.40" y2="395.30" stroke="#f22" stroke-width="1"/>
<line x1="592.70" y1="392.30" x2="604.70" y2="392.30" stroke="#f00" stroke-width="0.9"/>
<line x1="598.70" y1="386.80" x2="598.70" y2="397.80" stroke="#f00" stroke-width="0.9"/>
<circle cx="598.70" cy="392.30" r="2.90" stroke="#0f0" stroke-width="1.0" fill="#803050" />
<line x1="595.70" y1="392.30" x2="601.70" y2="392.30" stroke="#f22" stroke-width="1"/>
<line x1="598.70" y1="389.30" x2="598.70" y2="395.30" stroke="#f22" stroke-width="1"/>
<line x1="548.00" y1="414.50" x2="592.40" y2="414.50" stroke="#f00" stroke-width="1" />
<line x1="547.90" y1="414.50" x2="559.90" y2="414.50" stroke="#f00" stroke-width="0.9"/>
<line x1="553.90" y1="409.00" x2="553.90" y2="420.00" stroke="#f00" stroke-width="0.9"/>
<circle cx="553.90" cy="414.50" r="2.90" stroke="#0f0" stroke-width="1.0" fill="#803050" />
<line x1="550.90" y1="414.50" x2="556.90" y2="414.50" stroke="#f22" stroke-width="1"/>
<line x1="553.90" y1="411.50" x2="553.90" y2="417.50" stroke="#f22" stroke-width="1"/>
<line x1="559.20" y1="414.50" x2="571.20" y2="414.50" stroke="#f00" stroke-width="0.9"/>
<line x1="565.20" y1="409.00" x2="565.20" y2="420.00" stroke="#f00" stroke-width="0.9"/>
<circle cx="565.20" cy="414.50" r="2.90" stroke="#0f0" stroke-width="1.0" fill="#803050" />
<line x1="562.20" y1="414.50" x2="568.20" y2="414.50" stroke="#f22" stroke-width="1"/>
<line x1="565.20" y1="411.50" x2="565.20" y2="417.50" stroke="#f22" stroke-width="1"/>
<line x1="570.50" y1="414.50" x2="582.50" y2="414.50" stroke="#f00" stroke-width="0.9"/>
<line x1="576.50" y1="409.00" x2="576.50" y2="420.00" stroke="#f00" stroke-width="0.9"/>
<circle cx="576.50" cy="414.50" r="2.90" stroke="#0f0" stroke-width="1.0" fill="#803050" />
<line x1="573.50" y1="414.50" x2="579.50" y2="414.50" stroke="#f22" stroke-width="1"/>
<line x1="576.50" y1="411.50" x2="576.50" y2="417.50" stroke="#f22" stroke-width="1"/>
<line x1="581.40" y1="414.50" x2="593.40" y2="414.50" stroke="#f00" stroke-width="0.9"/>
<line x1="587.40" y1="409.00" x2="587.40" y2="420.00" stroke="#f00" stroke-width="0.9"/>
<circle cx="587.40" cy="414.50" r="2.90" stroke="#0f0" stroke-width="1.0" fill="#803050" />
<line x1="584.40" y1="414.50" x2="590.40" y2="414.50" stroke="#f22" stroke-width="1"/>
<line x1="587.40" y1="411.50" x2="587.40" y2="417.50" stroke="#f22" stroke-width="1"/>
<line x1="548.00" y1="425.50" x2="592.40" y2="425.50" stroke="#f00" stroke-width="1" />
<line x1="547.90" y1="425.80" x2="559.90" y2="425.80" stroke="#f00" stroke-width="0.9"/>
<line x1="553.90" y1="420.30" x2="553.90" y2="431.30" stroke="#f00" stroke-width="0.9"/>
<circle cx="553.90" cy="425.80" r="2.90" stroke="#0f0" stroke-width="1.0" fill="#803050" />
<line x1="550.90" y1="425.80" x2="556.90" y2="425.80" stroke="#f22" stroke-width="1"/>
<line x1="553.90" y1="422.80" x2="553.90" y2="428.80" stroke="#f22" stroke-width="1"/>
<line x1="559.20" y1="425.80" x2="571.20" y2="425.80" stroke="#f00" stroke-width="0.9"/>
<line x1="565.20" y1="420.30" x2="565.20" y2="431.30" stroke="#f00" stroke-width="0.9"/>
<circle cx="565.20" cy="425.80" r="2.90" stroke="#0f0" stroke-width="1.0" fill="#803050" />
<line x1="562.20" y1="425.80" x2="568.20" y2="425.80" stroke="#f22" stroke-width="1"/>
<line x1="565.20" y1="422.80" x2="565.20" y2="428.80" stroke="#f22" stroke-width="1"/>
<line x1="570.50" y1="425.80" x2="582.50" y2="425.80" stroke="#f00" stroke-width="0.9"/>
<line x1="576.50" y1="420.30" x2="576.50" y2="431.30" stroke="#f00" stroke-width="0.9"/>
<circle cx="576.50" cy="425.80" r="2.90" stroke="#0f0" stroke-width="1.0" fill="#803050" />
<line x1="573.50" y1="425.80" x2="579.50" y2="425.80" stroke="#f22" stroke-width="1"/>
<line x1="576.50" y1="422.80" x2="576.50" y2="428.80" stroke="#f22" stroke-width="1"/>
<line x1="581.40" y1="425.80" x2="593.40" y2="425.80" stroke="#f00" stroke-width="0.9"/>
<line x1="587.40" y1="420.30" x2="587.40" y2="431.30" stroke="#f00" stroke-width="0.9"/>
<circle cx="587.40" cy="425.80" r="2.90" stroke="#0f0" stroke-width="1.0" fill="#803050" />
<line x1="584.40" y1="425.80" x2="590.40" y2="425.80" stroke="#f22" stroke-width="1"/>
<line x1="587.40" y1="422.80" x2="587.40" y2="428.80" stroke="#f22" stroke-width="1"/>
<line x1="626.50" y1="380.50" x2="626.50" y2="425.80" stroke="#fff" stroke-width="1.2" />
<line x1="611.00" y1="380.50" x2="626.50" y2="380.50" stroke="#fff" stroke-width="1.2" />
<line x1="611.00" y1="392.50" x2="626.50" y2="392.50" stroke="#fff" stroke-width="1.2" />
<line x1="611.00" y1="414.50" x2="626.50" y2="414.50" stroke="#fff" stroke-width="1.2" />
<line x1="611.00" y1="425.50" x2="626.50" y2="425.50" stroke="#fff" stroke-width="1.2" />
<text x="0" y="0" fill="#0f0" font-size="4.5" text-anchor="middle" font-weight="bold" dominant-baseline="central" transform="translate(623.00,386.40) rotate(-90)">700</text>
<text x="0" y="0" fill="#0f0" font-size="4.5" text-anchor="middle" font-weight="bold" dominant-baseline="central" transform="translate(623.00,403.40) rotate(-90)">1500</text>
<text x="0" y="0" fill="#0f0" font-size="4.5" text-anchor="middle" font-weight="bold" dominant-baseline="central" transform="translate(623.00,420.15) rotate(-90)">700</text>
<line x1="553.90" y1="452.50" x2="598.70" y2="452.50" stroke="#fff" stroke-width="1.2" />
<line x1="553.50" y1="438.00" x2="553.50" y2="453.00" stroke="#fff" stroke-width="1.2" />
<line x1="565.50" y1="438.00" x2="565.50" y2="453.00" stroke="#fff" stroke-width="1.2" />
<line x1="576.50" y1="438.00" x2="576.50" y2="453.00" stroke="#fff" stroke-width="1.2" />
<line x1="587.50" y1="438.00" x2="587.50" y2="453.00" stroke="#fff" stroke-width="1.2" />
<line x1="598.50" y1="438.00" x2="598.50" y2="453.00" stroke="#fff" stroke-width="1.2" />
<text x="559.55" y="451.00" fill="#0f0" font-size="4.5" text-anchor="middle" font-weight="bold"  stroke="#0f0" stroke-width="0.22">700</text>
<text x="570.85" y="451.00" fill="#0f0" font-size="4.5" text-anchor="middle" font-weight="bold"  stroke="#0f0" stroke-width="0.22">700</text>
<text x="581.95" y="451.00" fill="#0f0" font-size="4.5" text-anchor="middle" font-weight="bold"  stroke="#0f0" stroke-width="0.22">700</text>
<text x="593.05" y="451.00" fill="#0f0" font-size="4.5" text-anchor="middle" font-weight="bold"  stroke="#0f0" stroke-width="0.22">700</text>
<text x="335.50" y="539.50" fill="#f0f" font-size="6.8" text-anchor="middle" font-weight="normal" textLength="121" lengthAdjust="spacingAndGlyphs" stroke="#f0f" stroke-width="0.15">FOUNDATION ARRANGEMENT PLAN</text>
<line x1="271.00" y1="541.50" x2="398.00" y2="541.50" stroke="#f0f" stroke-width="1.1" />
<text x="388.00" y="546.00" fill="#0f0" font-size="4.5" text-anchor="middle" font-weight="bold"  stroke="#0f0" stroke-width="0.22">S=1/50</text>
<line x1="653.80" y1="159.50" x2="782.40" y2="159.50" stroke="#ff0" stroke-width="1.3" />
<line x1="653.80" y1="168.50" x2="782.40" y2="168.50" stroke="#ff0" stroke-width="1.3" />
<text x="718.00" y="165.80" fill="#ff0" font-size="5.8" text-anchor="middle" font-weight="bold"  stroke="#ff0" stroke-width="0.22">KEY PLAN</text>
<line x1="653.80" y1="275.50" x2="782.40" y2="275.50" stroke="#ff0" stroke-width="1.3" />
<line x1="653.80" y1="284.50" x2="782.40" y2="284.50" stroke="#ff0" stroke-width="1.3" />
<text x="718.00" y="282.20" fill="#ff0" font-size="5.8" text-anchor="middle" font-weight="bold"  stroke="#ff0" stroke-width="0.22">REFERENCE DWGS</text>
<line x1="653.80" y1="292.50" x2="782.40" y2="292.50" stroke="#fff" stroke-width="1.2" />
<line x1="653.80" y1="300.50" x2="782.40" y2="300.50" stroke="#fff" stroke-width="1.2" />
<line x1="653.80" y1="307.50" x2="782.40" y2="307.50" stroke="#fff" stroke-width="1.2" />
<line x1="653.80" y1="315.50" x2="782.40" y2="315.50" stroke="#fff" stroke-width="1.2" />
<line x1="653.80" y1="323.50" x2="782.40" y2="323.50" stroke="#fff" stroke-width="1.2" />
<line x1="653.80" y1="331.50" x2="782.40" y2="331.50" stroke="#fff" stroke-width="1.2" />
<line x1="661.50" y1="284.80" x2="661.50" y2="338.30" stroke="#ccc" stroke-width="1.3" />
<line x1="704.50" y1="284.80" x2="704.50" y2="338.30" stroke="#fff" stroke-width="1.2" />
<text x="657.50" y="291.00" fill="#0f0" font-size="4" text-anchor="middle" font-weight="bold"  stroke="#0f0" stroke-width="0.22">NO.</text>
<text x="683.00" y="291.00" fill="#0f0" font-size="4" text-anchor="middle" font-weight="bold"  stroke="#0f0" stroke-width="0.22">DWG NO.</text>
<text x="743.00" y="291.00" fill="#0f0" font-size="4" text-anchor="middle" font-weight="bold"  stroke="#0f0" stroke-width="0.22">DWG TITLE</text>
<line x1="653.80" y1="338.50" x2="782.40" y2="338.50" stroke="#ff0" stroke-width="1.3" />
<line x1="653.80" y1="347.50" x2="782.40" y2="347.50" stroke="#ff0" stroke-width="1.3" />
<text x="718.00" y="345.50" fill="#ff0" font-size="5.8" text-anchor="middle" font-weight="bold"  stroke="#ff0" stroke-width="0.22">NOTES</text>
<line x1="653.80" y1="444.50" x2="782.40" y2="444.50" stroke="#ff0" stroke-width="1.3" />
<line x1="653.80" y1="452.50" x2="782.40" y2="452.50" stroke="#bbb" stroke-width="1.2" />
<line x1="653.80" y1="459.50" x2="782.40" y2="459.50" stroke="#fff" stroke-width="1.2" />
<line x1="653.80" y1="466.50" x2="782.40" y2="466.50" stroke="#bbb" stroke-width="1.2" />
<line x1="653.80" y1="474.50" x2="782.40" y2="474.50" stroke="#fff" stroke-width="1.2" />
<line x1="653.80" y1="482.50" x2="782.40" y2="482.50" stroke="#fff" stroke-width="1.2" />
<line x1="653.80" y1="489.50" x2="782.40" y2="489.50" stroke="#fff" stroke-width="1.2" />
<line x1="661.50" y1="444.60" x2="661.50" y2="489.70" stroke="#fff" stroke-width="1.2" />
<line x1="680.50" y1="444.60" x2="680.50" y2="489.70" stroke="#fff" stroke-width="1.2" />
<line x1="744.50" y1="444.60" x2="744.50" y2="489.70" stroke="#fff" stroke-width="1.2" />
<line x1="751.50" y1="444.60" x2="751.50" y2="489.70" stroke="#fff" stroke-width="1.2" />
<line x1="759.50" y1="444.60" x2="759.50" y2="489.70" stroke="#fff" stroke-width="1.2" />
<line x1="767.50" y1="444.60" x2="767.50" y2="489.70" stroke="#fff" stroke-width="1.2" />
<line x1="774.50" y1="444.60" x2="774.50" y2="489.70" stroke="#fff" stroke-width="1.2" />
<polygon points="657.7,445.6 660.3,448.0 657.7,450.4 655.1,448.0" fill="#000" stroke="#fff" stroke-width="0.9"/>
<polygon points="657.7,450.2 660.3,452.6 657.7,455.0 655.1,452.6" fill="#000" stroke="#fff" stroke-width="0.9"/>
<polygon points="657.7,454.8 660.3,457.2 657.7,459.6 655.1,457.2" fill="#000" stroke="#fff" stroke-width="0.9"/>
<polygon points="657.7,459.4 660.3,461.8 657.7,464.2 655.1,461.8" fill="#000" stroke="#fff" stroke-width="0.9"/>
<polygon points="657.7,464.0 660.3,466.4 657.7,468.8 655.1,466.4" fill="#000" stroke="#fff" stroke-width="0.9"/>
<polygon points="657.7,468.6 660.3,471.0 657.7,473.4 655.1,471.0" fill="#000" stroke="#fff" stroke-width="0.9"/>
<polygon points="657.7,473.2 660.3,475.6 657.7,478.0 655.1,475.6" fill="#000" stroke="#fff" stroke-width="0.9"/>
<polygon points="657.7,477.8 660.3,480.2 657.7,482.6 655.1,480.2" fill="#000" stroke="#fff" stroke-width="0.9"/>
<text x="657.70" y="487.60" fill="#fff" font-size="2.5" text-anchor="middle" font-weight="bold"  stroke="#fff" stroke-width="0.22">REV</text>
<text x="671.00" y="487.60" fill="#fff" font-size="2.5" text-anchor="middle" font-weight="bold"  stroke="#fff" stroke-width="0.22">DATE</text>
<text x="712.00" y="487.60" fill="#fff" font-size="2.5" text-anchor="middle" font-weight="bold"  stroke="#fff" stroke-width="0.22">DESCRIPTION</text>
<text x="748.00" y="487.60" fill="#fff" font-size="2.5" text-anchor="middle" font-weight="bold"  stroke="#fff" stroke-width="0.22">DRWN</text>
<text x="755.60" y="487.60" fill="#fff" font-size="2.5" text-anchor="middle" font-weight="bold"  stroke="#fff" stroke-width="0.22">CHKD</text>
<text x="763.50" y="487.60" fill="#fff" font-size="2.5" text-anchor="middle" font-weight="bold"  stroke="#fff" stroke-width="0.22">APPD</text>
<text x="771.00" y="487.60" fill="#fff" font-size="2.5" text-anchor="middle" font-weight="bold"  stroke="#fff" stroke-width="0.22">APPD</text>
<text x="778.50" y="487.60" fill="#fff" font-size="2.5" text-anchor="middle" font-weight="bold"  stroke="#fff" stroke-width="0.22">APPD</text>
<text x="718.70" y="508.80" fill="#0ff" font-size="6.2" text-anchor="middle" font-weight="normal" textLength="72.6" lengthAdjust="spacingAndGlyphs" stroke="#0ff" stroke-width="0.22">FOUNDATION DETAIL FOR</text>
<line x1="653.80" y1="514.50" x2="782.40" y2="514.50" stroke="#fff" stroke-width="1.2" />
<path d="M660.70,522.70 A4.4,4.4 0 0 1 665.10,518.30" stroke="#f0d020" stroke-width="2.4" fill="none"/>
<path d="M665.10,518.30 A4.4,4.4 0 0 1 669.43,521.94" stroke="#ff5010" stroke-width="2.4" fill="none"/>
<path d="M669.43,521.94 A4.4,4.4 0 0 1 665.86,527.03" stroke="#20d0f0" stroke-width="2.4" fill="none"/>
<path d="M665.86,527.03 A4.4,4.4 0 0 1 660.70,522.70" stroke="#40c040" stroke-width="2.4" fill="none"/>
<path d="M668,518.5 L671,516.8 L669.5,520 Z" fill="#ff3010"/>
<path d="M661.5,523.5 Q664,520.5 666,523 Q668,525 670,522.5" stroke="#2060e0" stroke-width="1.8" fill="none"/>
<text x="678.00" y="526.10" fill="#18b0f0" font-size="8" text-anchor="middle" font-weight="bold" textLength="10.5" lengthAdjust="spacingAndGlyphs" stroke="#18b0f0" stroke-width="0.6">GS</text>
<text x="732.00" y="526.30" fill="#b0b0b0" font-size="8.6" text-anchor="middle" font-weight="normal" textLength="92" lengthAdjust="spacingAndGlyphs" stroke="#b0b0b0" stroke-width="0.22">Engineering &amp; Construction</text>
<line x1="653.80" y1="531.50" x2="782.40" y2="531.50" stroke="#fff" stroke-width="1.2" />
<text x="716.60" y="540.50" fill="#ff0" font-size="6" text-anchor="middle" font-weight="bold"  stroke="#ff0" stroke-width="0.22">Layout</text>
<line x1="660.60" y1="542.50" x2="773.00" y2="542.50" stroke="#ccc" stroke-width="1.2" />
<rect x="704.50" y="544.50" width="24.00" height="7.00" stroke="#fff" stroke-width="1.1" fill="none" rx="3.8"/>
<line x1="653.80" y1="554.50" x2="782.40" y2="554.50" stroke="#fff" stroke-width="1.2" />
<line x1="668.00" y1="562.50" x2="782.40" y2="562.50" stroke="#fff" stroke-width="1.2" />
<line x1="668.00" y1="570.50" x2="782.40" y2="570.50" stroke="#fff" stroke-width="1.2" />
<line x1="668.00" y1="578.50" x2="782.40" y2="578.50" stroke="#fff" stroke-width="1.2" />
<line x1="653.80" y1="584.50" x2="782.40" y2="584.50" stroke="#fff" stroke-width="1.3" />
<line x1="653.80" y1="599.50" x2="782.40" y2="599.50" stroke="#fff" stroke-width="1.2" />
<line x1="668.50" y1="554.40" x2="668.50" y2="599.40" stroke="#fff" stroke-width="1.2" />
<line x1="686.50" y1="554.40" x2="686.50" y2="585.00" stroke="#fff" stroke-width="1.2" />
<line x1="706.50" y1="554.40" x2="706.50" y2="585.00" stroke="#fff" stroke-width="1.2" />
<line x1="725.50" y1="554.40" x2="725.50" y2="585.00" stroke="#fff" stroke-width="1.2" />
<line x1="744.50" y1="554.40" x2="744.50" y2="585.00" stroke="#fff" stroke-width="1.2" />
<line x1="763.50" y1="554.40" x2="763.50" y2="585.00" stroke="#fff" stroke-width="1.2" />
<text x="661.00" y="568.00" fill="#fff" font-size="3.2" text-anchor="middle" font-weight="bold" textLength="10" lengthAdjust="spacingAndGlyphs" stroke="#fff" stroke-width="0.22">DESIGN</text>
<text x="661.00" y="572.00" fill="#fff" font-size="3.2" text-anchor="middle" font-weight="bold" textLength="10" lengthAdjust="spacingAndGlyphs" stroke="#fff" stroke-width="0.22">GROUP</text>
<text x="677.50" y="583.30" fill="#fff" font-size="3.6" text-anchor="middle" font-weight="bold" textLength="12" lengthAdjust="spacingAndGlyphs" stroke="#fff" stroke-width="0.15">PREPARED</text>
<text x="696.50" y="583.30" fill="#fff" font-size="3.6" text-anchor="middle" font-weight="bold" textLength="12" lengthAdjust="spacingAndGlyphs" stroke="#fff" stroke-width="0.15">CHECKED</text>
<text x="715.80" y="583.30" fill="#fff" font-size="3.6" text-anchor="middle" font-weight="bold" textLength="12" lengthAdjust="spacingAndGlyphs" stroke="#fff" stroke-width="0.15">REVIEWED</text>
<text x="735.00" y="583.30" fill="#fff" font-size="3.6" text-anchor="middle" font-weight="bold" textLength="12" lengthAdjust="spacingAndGlyphs" stroke="#fff" stroke-width="0.15">APPROVED</text>
<text x="754.00" y="583.30" fill="#fff" font-size="3.6" text-anchor="middle" font-weight="bold" textLength="12" lengthAdjust="spacingAndGlyphs" stroke="#fff" stroke-width="0.15">DATE</text>
<text x="773.00" y="583.30" fill="#fff" font-size="3.6" text-anchor="middle" font-weight="bold" textLength="12" lengthAdjust="spacingAndGlyphs" stroke="#fff" stroke-width="0.15">REV</text>
<text x="679.50" y="594.20" fill="#ff0" font-size="6" text-anchor="middle" font-weight="bold" textLength="12" lengthAdjust="spacingAndGlyphs" stroke="#ff0" stroke-width="0.2">DWG</text>
<text x="693.50" y="594.20" fill="#ff0" font-size="6" text-anchor="middle" font-weight="bold" textLength="7.5" lengthAdjust="spacingAndGlyphs" stroke="#ff0" stroke-width="0.2">NO</text>
<polygon points="774,585.5 780.5,592 774,598.5 767.5,592" fill="none" stroke="#fff" stroke-width="1.1"/>
<text x="774.00" y="594.00" fill="#ff0" font-size="5" text-anchor="middle" font-weight="bold"  stroke="#ff0" stroke-width="0.22">A</text>
<line x1="686.50" y1="599.40" x2="686.50" y2="607.00" stroke="#fff" stroke-width="1.2" />
<line x1="729.50" y1="599.40" x2="729.50" y2="607.00" stroke="#fff" stroke-width="1.2" />
<text x="656.50" y="604.60" fill="#fff" font-size="3.4" text-anchor="start" font-weight="bold" textLength="9"  lengthAdjust="spacingAndGlyphs" stroke="#fff" stroke-width="0.22">SCALE</text>
<text x="674.00" y="604.80" fill="#0f0" font-size="4" text-anchor="middle" font-weight="bold"  stroke="#0f0" stroke-width="0.22">1/50</text>
<text x="688.50" y="604.60" fill="#fff" font-size="3.4" text-anchor="start" font-weight="bold" textLength="8"  lengthAdjust="spacingAndGlyphs" stroke="#fff" stroke-width="0.22">JOB NO.</text>
<text x="731.50" y="604.60" fill="#fff" font-size="3.4" text-anchor="start" font-weight="bold" textLength="17"  lengthAdjust="spacingAndGlyphs" stroke="#fff" stroke-width="0.22">FORMAT NO.</text>
</svg>
</body></html>
